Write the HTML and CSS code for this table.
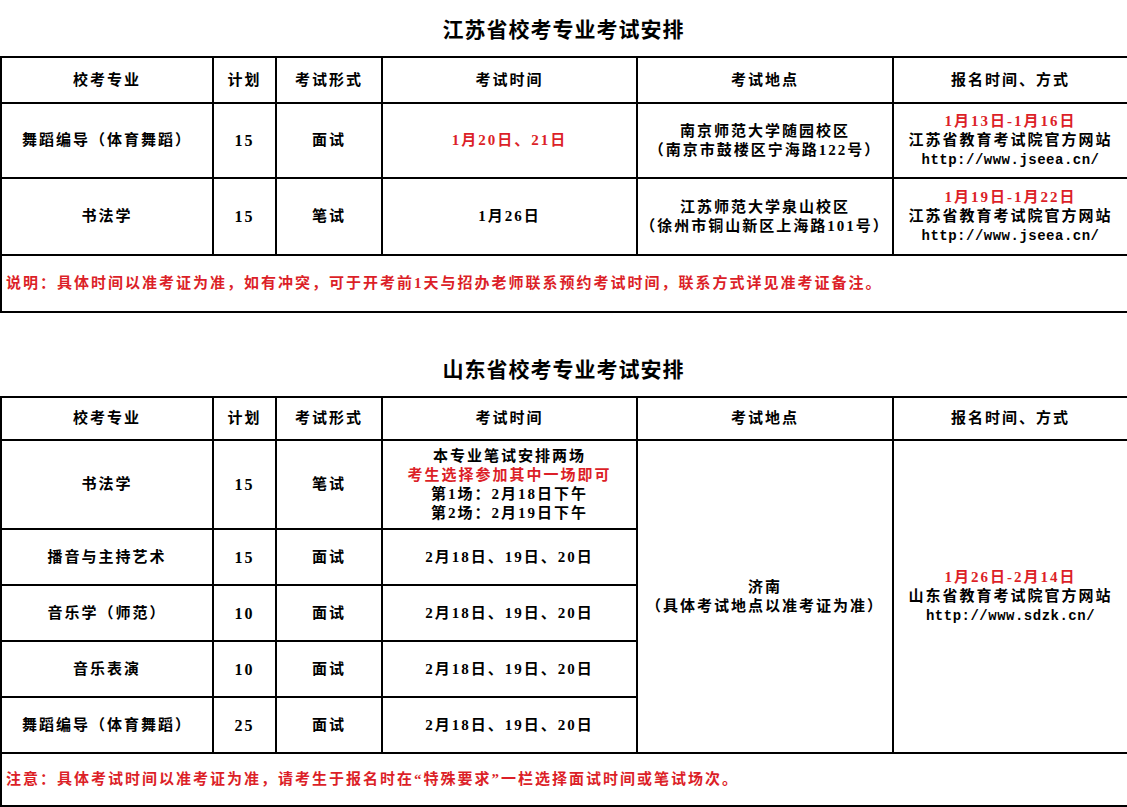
FILE: index.html
```html
<!DOCTYPE html>
<html lang="zh-CN">
<head>
<meta charset="utf-8">
<title>校考专业考试安排</title>
<link rel="stylesheet" href="styles.css">
</head>
<body>
<section class="section">
  <h2 class="title">江苏省校考专业考试安排</h2>
  <table class="sched">
    <colgroup>
      <col class="c1"><col class="c2"><col class="c3"><col class="c4"><col class="c5"><col class="c6">
    </colgroup>
    <tr class="head h46">
      <td>校考专业</td><td>计划</td><td>考试形式</td><td>考试时间</td><td>考试地点</td><td>报名时间、方式</td>
    </tr>
    <tr class="h75">
      <td>舞蹈编导（体育舞蹈）</td><td class="num">15</td><td>面试</td><td class="red">1月20日、21日</td>
      <td>南京师范大学随园校区<br>（南京市鼓楼区宁海路122号）</td>
      <td><span class="red">1月13日-1月16日</span><br>江苏省教育考试院官方网站<br><span class="url">http://www.jseea.cn/</span></td>
    </tr>
    <tr class="h77">
      <td>书法学</td><td class="num">15</td><td>笔试</td><td>1月26日</td>
      <td>江苏师范大学泉山校区<br>（徐州市铜山新区上海路101号）</td>
      <td><span class="red">1月19日-1月22日</span><br>江苏省教育考试院官方网站<br><span class="url">http://www.jseea.cn/</span></td>
    </tr>
    <tr class="h57">
      <td colspan="6" class="note red">说明：具体时间以准考证为准，如有冲突，可于开考前1天与招办老师联系预约考试时间，联系方式详见准考证备注。</td>
    </tr>
  </table>
</section>

<section class="section second">
  <h2 class="title">山东省校考专业考试安排</h2>
  <table class="sched">
    <colgroup>
      <col class="c1"><col class="c2"><col class="c3"><col class="c4"><col class="c5"><col class="c6">
    </colgroup>
    <tr class="head h43">
      <td>校考专业</td><td>计划</td><td>考试形式</td><td>考试时间</td><td>考试地点</td><td>报名时间、方式</td>
    </tr>
    <tr class="h89">
      <td>书法学</td><td class="num">15</td><td>笔试</td>
      <td>本专业笔试安排两场<br><span class="red">考生选择参加其中一场即可</span><br>第1场：2月18日下午<br>第2场：2月19日下午</td>
      <td rowspan="5">济南<br>（具体考试地点以准考证为准）</td>
      <td rowspan="5"><span class="red">1月26日-2月14日</span><br>山东省教育考试院官方网站<br><span class="url">http://www.sdzk.cn/</span></td>
    </tr>
    <tr class="h56">
      <td>播音与主持艺术</td><td class="num">15</td><td>面试</td><td>2月18日、19日、20日</td>
    </tr>
    <tr class="h56">
      <td>音乐学（师范）</td><td class="num">10</td><td>面试</td><td>2月18日、19日、20日</td>
    </tr>
    <tr class="h56">
      <td>音乐表演</td><td class="num">10</td><td>面试</td><td>2月18日、19日、20日</td>
    </tr>
    <tr class="h56">
      <td>舞蹈编导（体育舞蹈）</td><td class="num">25</td><td>面试</td><td>2月18日、19日、20日</td>
    </tr>
    <tr class="h53">
      <td colspan="6" class="note red">注意：具体考试时间以准考证为准，请考生于报名时在“特殊要求”一栏选择面试时间或笔试场次。</td>
    </tr>
  </table>
</section>
</body>
</html>
```

FILE: styles.css
```css
html, body {
  margin: 0;
  padding: 0;
  background: #ffffff;
}

body {
  font-family: "Liberation Serif", "Noto Sans CJK SC", serif;
  color: #000000;
}

.section {
  width: 1127px;
}

.second {
  margin-top: 27px;
}

.title {
  margin: 0;
  height: 56px;
  display: flex;
  align-items: center;
  justify-content: center;
  font-family: "Noto Sans CJK SC", sans-serif;
  font-size: 21px;
  font-weight: 600;
  letter-spacing: 1px;
}

.sched {
  width: 1127px;
  border-collapse: collapse;
  table-layout: fixed;
}

.c1 { width: 212px; }
.c2 { width: 63px; }
.c3 { width: 106px; }
.c4 { width: 255px; }
.c5 { width: 256px; }
.c6 { width: 235px; }

.sched td {
  border: 2px solid #000000;
  padding: 0;
  text-align: center;
  vertical-align: middle;
  font-size: 15px;
  font-weight: bold;
  letter-spacing: 2px;
  line-height: 19px;
}

.sched td.num {
  font-size: 16px;
}

.h43 { height: 43px; }
.h46 { height: 46px; }
.h53 { height: 53px; }
.h56 { height: 56px; }
.h57 { height: 57px; }
.h75 { height: 75px; }
.h77 { height: 77px; }
.h89 { height: 89px; }

.sched td.note {
  text-align: left;
  padding-left: 4px;
}

.red {
  color: #dc1f28;
}

.url {
  font-family: "Liberation Mono", monospace;
  font-size: 14px;
  letter-spacing: 0.5px;
}
```
